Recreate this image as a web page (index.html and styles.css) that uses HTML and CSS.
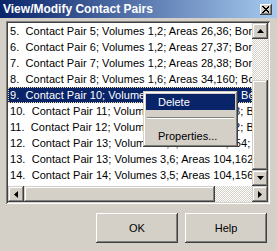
FILE: index.html
```html
<!DOCTYPE html>
<html lang="en">
<head>
    <meta charset="UTF-8">
    <title>View/Modify Contact Pairs</title>
    <link rel="stylesheet" href="styles.css">
</head>
<body>
    <div class="titlebar">
        <span class="title">View/Modify Contact Pairs</span>
        <span class="close">
            <svg width="8" height="7" viewBox="0 0 8 7"><path d="M0.5 0.5 L7 6.5 M1.5 0.5 L7.5 6.5 M7 0.5 L0.5 6.5 M7.5 0.5 L1 6.5" stroke="#000" stroke-width="1" shape-rendering="crispEdges"/></svg>
        </span>
    </div>

    <div class="dialog">
        <div class="listbox">
            <div class="rows">
                <div class="row">5.  Contact Pair 5; Volumes 1,2; Areas 26,36; Border 1</div>
                <div class="row">6.  Contact Pair 6; Volumes 1,2; Areas 27,37; Border 1</div>
                <div class="row">7.  Contact Pair 7; Volumes 1,2; Areas 28,38; Border 1</div>
                <div class="row">8.  Contact Pair 8; Volumes 1,6; Areas 34,160; Border 1</div>
                <div class="row selected">9.  Contact Pair 10; Volumes 1,2; Areas 29,39; Border 1</div>
                <div class="row">10.  Contact Pair 11; Volumes 1,7; Areas 30,33; Border 1</div>
                <div class="row">11.  Contact Pair 12; Volumes 1,7; Areas 32,42; Border 1</div>
                <div class="row">12.  Contact Pair 13; Volumes 1,5; Areas 31,154; Border 1</div>
                <div class="row">13.  Contact Pair 13; Volumes 3,6; Areas 104,162; Border 1</div>
                <div class="row">14.  Contact Pair 14; Volumes 3,5; Areas 104,156; Border 1</div>
            </div>
            <div class="vscroll">
                <div class="sbtn"><svg width="7" height="4" viewBox="0 0 7 4"><polygon points="3.5,0 7,4 0,4" fill="#000"/></svg></div>
                <div class="track vtrack"></div>
                <div class="thumb vthumb"></div>
                <div class="sbtn"><svg width="7" height="4" viewBox="0 0 7 4"><polygon points="0,0 7,0 3.5,4" fill="#000"/></svg></div>
            </div>
            <div class="hscroll">
                <div class="sbtn"><svg width="4" height="7" viewBox="0 0 4 7"><polygon points="0,3.5 4,0 4,7" fill="#000"/></svg></div>
                <div class="thumb hthumb"></div>
                <div class="track htrack"></div>
                <div class="sbtn"><svg width="4" height="7" viewBox="0 0 4 7"><polygon points="0,0 4,3.5 0,7" fill="#000"/></svg></div>
            </div>
        </div>

        <div class="actions">
            <button class="push">OK</button>
            <button class="push">Help</button>
        </div>
    </div>

    <div class="menu">
        <div class="item active">Delete</div>
        <div class="separator"></div>
        <div class="item">Properties...</div>
    </div>
</body>
</html>
```

FILE: styles.css
```css
* {
    margin: 0;
    padding: 0;
    box-sizing: border-box;
}
body {
    width: 277px;
    height: 251px;
    overflow: hidden;
    position: relative;
    background-color: #d4d0c8;
    font-family: "Liberation Sans", Arial, sans-serif;
    font-size: 11px;
    color: #000;
}
.titlebar {
    height: 18px;
    background: linear-gradient(to right, #0a246a, #a6caf0);
    display: flex;
    align-items: center;
    justify-content: space-between;
    padding: 0 5px 0 3px;
}
.title {
    color: #fff;
    font-weight: bold;
    font-size: 12px;
}
.close {
    width: 12px;
    height: 11px;
    background-color: #d4d0c8;
    box-shadow: inset -1px -1px #404040, inset 1px 1px #fff, inset -2px -2px #808080;
    display: flex;
    align-items: center;
    justify-content: center;
}
.dialog {
    padding: 3px 7px 0 6px;
}
.listbox {
    padding: 2px;
    background-color: #fff;
    box-shadow: inset 1px 1px #808080, inset -1px -1px #fff, inset 2px 2px #404040, inset -2px -2px #d4d0c8;
    display: grid;
    grid-template-columns: 1fr 16px;
    grid-template-rows: 163px 16px;
}
.rows {
    overflow: hidden;
}
.row {
    height: 16px;
    line-height: 16px;
    padding-left: 2px;
    white-space: pre;
    overflow: hidden;
    letter-spacing: 0.05px;
}
.row.selected {
    background-color: #0a246a;
    color: #fff;
    outline: 1px dotted #f5db95;
    outline-offset: -1px;
}
.vscroll {
    display: flex;
    flex-direction: column;
}
.hscroll {
    grid-column: 1 / 3;
    display: flex;
}
.sbtn {
    width: 16px;
    height: 16px;
    flex: none;
    background-color: #d4d0c8;
    box-shadow: inset -1px -1px #404040, inset 1px 1px #d4d0c8, inset -2px -2px #808080, inset 2px 2px #fff;
    display: flex;
    align-items: center;
    justify-content: center;
}
.sbtn svg {
    display: block;
}
.track {
    background: repeating-conic-gradient(#fff 0 25%, #d4d0c8 0 50%) 0 0 / 2px 2px;
}
.thumb {
    background-color: #d4d0c8;
    box-shadow: inset -1px -1px #404040, inset 1px 1px #d4d0c8, inset -2px -2px #808080, inset 2px 2px #fff;
}
.vtrack {
    height: 41px;
}
.vthumb {
    flex: 1;
}
.hthumb {
    width: 191px;
}
.htrack {
    flex: 1;
}
.actions {
    display: flex;
    justify-content: flex-end;
    gap: 7px;
    padding: 9px 3px 0 0;
}
.push {
    width: 82px;
    height: 30px;
    border: none;
    background-color: #d4d0c8;
    box-shadow: inset -1px -1px #404040, inset 1px 1px #fff, inset -2px -2px #808080;
    font-family: "Liberation Sans", Arial, sans-serif;
    font-size: 11px;
    color: #000;
}
.menu {
    position: absolute;
    left: 143px;
    top: 91px;
    width: 95px;
    padding: 3px;
    background-color: #d4d0c8;
    box-shadow: inset -1px -1px #404040, inset 1px 1px #d4d0c8, inset -2px -2px #808080, inset 2px 2px #fff;
}
.item {
    height: 16px;
    line-height: 16px;
    padding-left: 12px;
}
.item.active {
    background-color: #0a246a;
    color: #fff;
}
.separator {
    height: 2px;
    margin: 7px 1px 9px;
    border-top: 1px solid #808080;
    border-bottom: 1px solid #fff;
}
```
